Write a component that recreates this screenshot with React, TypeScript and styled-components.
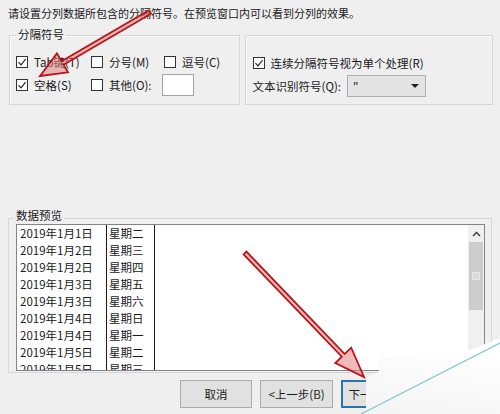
import React from "react";
import styled, { createGlobalStyle } from "styled-components";

const Global = createGlobalStyle`
  html, body { margin: 0; padding: 0; }
  body {
    width: 500px; height: 414px; overflow: hidden;
    background: #efefef;
    font-family: "Noto Sans CJK SC", "Noto Sans", sans-serif;
    font-size: 11.5px; color: #1a1a1a;
  }
  * { box-sizing: border-box; }
`;

const Page = styled.div`
  position: relative;
  width: 500px;
  height: 414px;
  overflow: hidden;
`;

const Instruction = styled.div`
  padding: 5px 0 0 8px;
  line-height: 16px;
  height: 21px;
  font-size: 11px;
  white-space: nowrap;
`;

const GroupRow = styled.div`
  display: flex;
  align-items: stretch;
  gap: 5px;
  padding: 0 7px 0 9px;
  margin-top: 7px;
  height: 77px;
`;

const Group = styled.fieldset<{ $w: number; $noLegend?: boolean }>`
  margin: ${(p) => (p.$noLegend ? "7px 0 0 0" : "0")};
  padding: ${(p) => (p.$noLegend ? "15px 0 0 7px" : "8px 0 0 6px")};
  width: ${(p) => p.$w}px;
  min-width: 0;
  border: 1px solid #d6d6d6;
  box-shadow: inset 1px 1px 0 #fafafa;
`;

const Legend = styled.legend`
  margin-left: 0;
  padding: 0 2px 2px 2px;
  line-height: 12px;
`;

const PreviewLegend = styled.legend`
  margin-left: -2px;
  padding: 0 2px 6px 2px;
  line-height: 12px;
`;

const OptionGrid = styled.div<{ $cols: string }>`
  display: grid;
  grid-template-columns: ${(p) => p.$cols};
  grid-auto-rows: 23px;
  align-items: center;
`;

const Option = styled.label`
  display: inline-flex;
  align-items: center;
  gap: 6px;
  white-space: nowrap;
  flex: none;
`;

const Box = styled.span`
  width: 12px;
  height: 12px;
  border: 1px solid #333;
  background: #fff;
  display: inline-flex;
  align-items: center;
  justify-content: center;
  flex: none;
`;

const TextBox = styled.span`
  display: inline-block;
  flex: none;
  width: 32px;
  height: 22px;
  margin-left: 10px;
  background: #fff;
  border: 1px solid #a3a3a3;
`;

const InlineRow = styled.div`
  display: flex;
  align-items: center;
  white-space: nowrap;
`;

const Select = styled.span`
  display: inline-flex;
  flex: none;
  align-items: center;
  justify-content: space-between;
  width: 79px;
  height: 22px;
  margin-left: 6px;
  padding: 0 6px 0 5px;
  background: #e4e4e4;
  border: 1px solid #adadad;
  line-height: 20px;
`;

const Caret = styled.span`
  width: 0;
  height: 0;
  border-left: 4px solid transparent;
  border-right: 4px solid transparent;
  border-top: 4px solid #222;
`;

const PreviewGroup = styled.fieldset`
  margin: 104px 8px 0 8px;
  padding: 0 6px 1px 7px;
  border: 1px solid #d6d6d6;
  min-width: 0;
`;

const ListBox = styled.div`
  display: flex;
  height: 147px;
  margin-top: -3px;
  background: #fff;
  border: 1px solid #80848c;
  overflow: hidden;
`;

const Column = styled.div<{ $w: number; $pl: number }>`
  width: ${(p) => p.$w}px;
  flex: none;
  border-right: 1px solid #1a1a1a;
  padding-left: ${(p) => p.$pl}px;
`;

const Cell = styled.div`
  height: 17px;
  line-height: 17px;
  white-space: nowrap;
`;

const Filler = styled.div`
  flex: 1;
`;

const ScrollBar = styled.div`
  width: 16px;
  flex: none;
  display: flex;
  flex-direction: column;
  background: #f0f0f0;
`;

const ScrollArrow = styled.div`
  height: 17px;
  display: flex;
  align-items: center;
  justify-content: center;
`;

const Thumb = styled.div`
  height: 68px;
  margin: 0 1px;
  background: #cdcdcd;
  display: flex;
  align-items: center;
  justify-content: center;
`;

const Grip = styled.span`
  width: 8px;
  height: 8px;
  border: 1px solid #e6e6e6;
  background: #dadada;
`;

const ButtonRow = styled.div`
  display: flex;
  justify-content: flex-end;
  gap: 8px;
  padding: 7px 7px 0 0;
`;

const Button = styled.div<{ $w: number; $primary?: boolean }>`
  width: ${(p) => p.$w}px;
  height: 28px;
  display: flex;
  align-items: center;
  justify-content: center;
  background: #e1e1e1;
  border: ${(p) => (p.$primary ? "2px solid #2b73aa" : "1px solid #adadad")};
  white-space: nowrap;
`;

const Overlay = styled.svg`
  position: absolute;
  left: 0;
  top: 0;
  pointer-events: none;
`;

const Check = () => (
  <svg width="10" height="10" viewBox="0 0 10 10">
    <path d="M1.5 5.2 L4 7.8 L8.6 2.2" fill="none" stroke="#222" strokeWidth="1.1" />
  </svg>
);

const CheckOption = ({ checked, label }: { checked?: boolean; label: string }) => (
  <Option>
    <Box>{checked && <Check />}</Box>
    {label}
  </Option>
);

const rows: [string, string][] = [
  ["2019年1月1日", "星期二"],
  ["2019年1月2日", "星期三"],
  ["2019年1月2日", "星期四"],
  ["2019年1月3日", "星期五"],
  ["2019年1月3日", "星期六"],
  ["2019年1月4日", "星期日"],
  ["2019年1月4日", "星期一"],
  ["2019年1月5日", "星期二"],
  ["2019年1月5日", "星期三"],
];

function arrowPts(x1: number, y1: number, x2: number, y2: number, sw: number, hl: number, hw: number) {
  const dx = x2 - x1, dy = y2 - y1;
  const L = Math.hypot(dx, dy);
  const ux = dx / L, uy = dy / L;
  const px = -uy, py = ux;
  const bx = x2 - ux * hl, by = y2 - uy * hl;
  const pts = [
    [x1 + px * sw, y1 + py * sw],
    [bx + px * sw, by + py * sw],
    [bx + px * hw, by + py * hw],
    [x2, y2],
    [bx - px * hw, by - py * hw],
    [bx - px * sw, by - py * sw],
    [x1 - px * sw, y1 - py * sw],
  ];
  return pts.map((p) => `${p[0].toFixed(1)},${p[1].toFixed(1)}`).join(" ");
}

export default function App() {
  return (
    <Page>
      <Global />
      <Instruction>请设置分列数据所包含的分隔符号。在预览窗口内可以看到分列的效果。</Instruction>
      <GroupRow>
        <Group $w={231}>
          <Legend>分隔符号</Legend>
          <OptionGrid $cols="75px 73px auto">
            <CheckOption checked label="Tab键(T)" />
            <CheckOption label="分号(M)" />
            <CheckOption label="逗号(C)" />
            <CheckOption checked label="空格(S)" />
            <InlineRow>
              <CheckOption label="其他(O):" />
              <TextBox />
            </InlineRow>
          </OptionGrid>
        </Group>
        <Group $w={249} $noLegend>
          <OptionGrid $cols="auto">
            <CheckOption checked label="连续分隔符号视为单个处理(R)" />
            <InlineRow>
              文本识别符号(Q):
              <Select>
                <span>"</span>
                <Caret />
              </Select>
            </InlineRow>
          </OptionGrid>
        </Group>
      </GroupRow>

      <PreviewGroup>
        <PreviewLegend>数据预览</PreviewLegend>
        <ListBox>
          <Column $w={90} $pl={3}>
            {rows.map((r, i) => (
              <Cell key={i}>{r[0]}</Cell>
            ))}
          </Column>
          <Column $w={48} $pl={2}>
            {rows.map((r, i) => (
              <Cell key={i}>{r[1]}</Cell>
            ))}
          </Column>
          <Filler />
          <ScrollBar>
            <ScrollArrow>
              <svg width="9" height="6" viewBox="0 0 9 6">
                <polyline points="1,5 4.5,1.5 8,5" fill="none" stroke="#333" strokeWidth="1.4" />
              </svg>
            </ScrollArrow>
            <Thumb>
              <Grip />
            </Thumb>
          </ScrollBar>
        </ListBox>
      </PreviewGroup>

      <ButtonRow>
        <Button $w={72}>取消</Button>
        <Button $w={73}>&lt;上一步(B)</Button>
        <Button $w={72} $primary>下一步(N)&gt;</Button>
        <Button $w={72}>完成(F)</Button>
      </ButtonRow>

      <Overlay width="500" height="414" viewBox="0 0 500 414">
        <defs>
          <linearGradient id="flap" x1="0" y1="1" x2="0.3" y2="0">
            <stop offset="0" stopColor="#f4f4f4" />
            <stop offset="1" stopColor="#ffffff" />
          </linearGradient>
        </defs>
        <polygon points="366,414 366,377 379,372 379,358 470,350 500,338 500,414" fill="url(#flap)" />
        <line x1="361" y1="414" x2="500" y2="343" stroke="#86c4d6" strokeWidth="1.2" />
        <polygon
          points={arrowPts(150, 12, 40, 76, 2, 26, 11)}
          fill="rgba(225,130,130,0.55)"
          stroke="#b8141a"
          strokeWidth="1.8"
          strokeLinejoin="miter"
        />
        <polygon
          points={arrowPts(245, 253, 364, 377, 2, 30, 11)}
          fill="rgba(225,130,130,0.55)"
          stroke="#b8141a"
          strokeWidth="1.8"
          strokeLinejoin="miter"
        />
      </Overlay>
    </Page>
  );
}
